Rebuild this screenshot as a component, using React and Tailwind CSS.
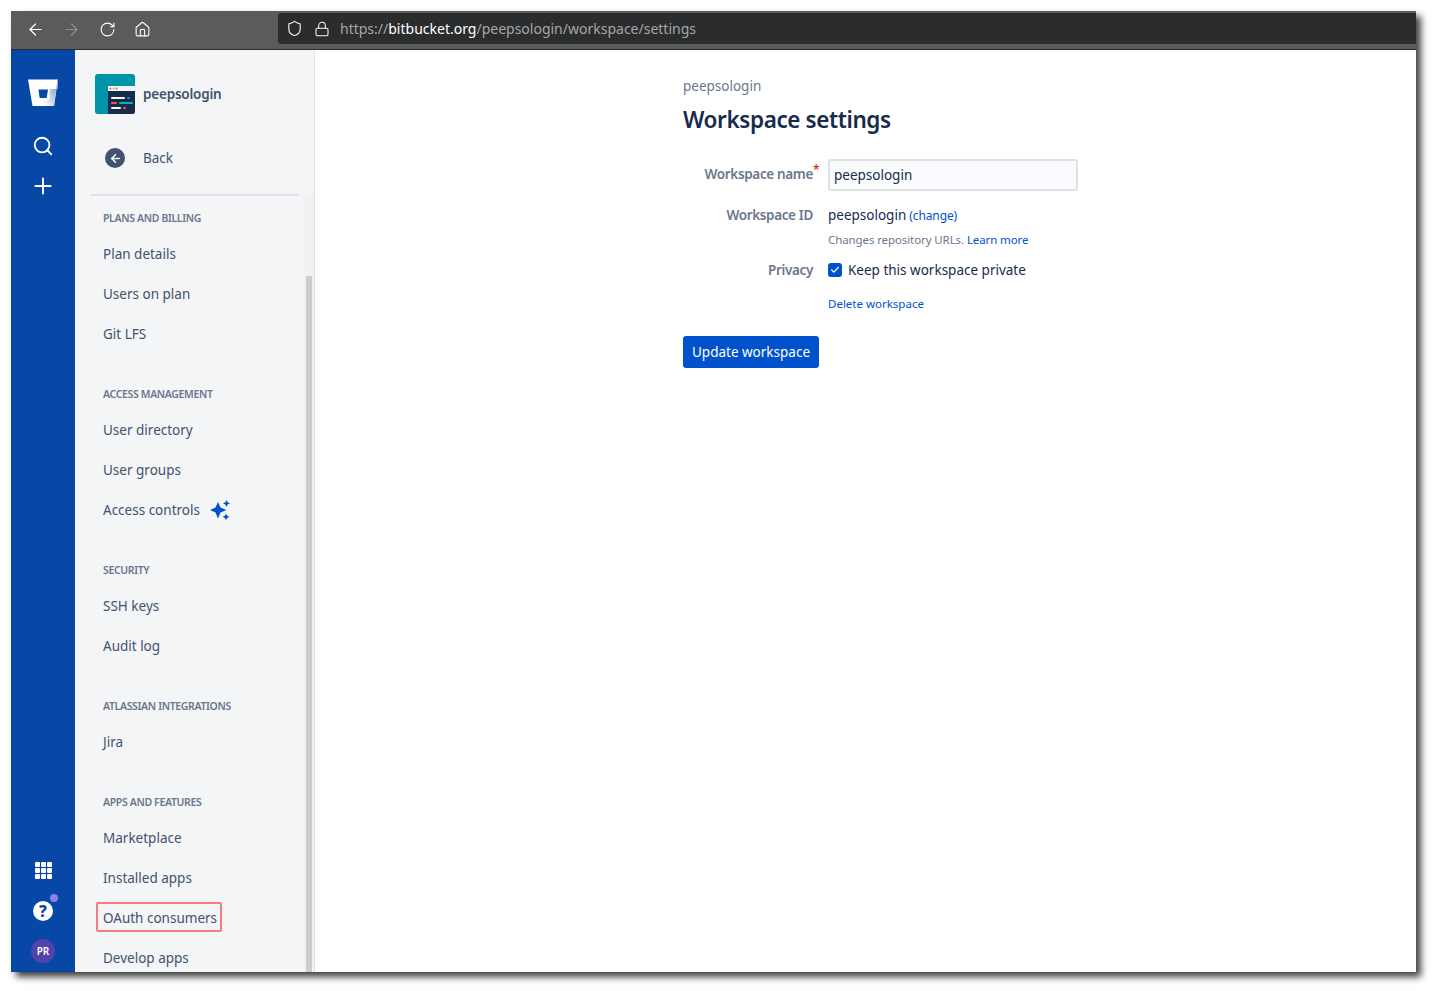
import { ArrowLeft, ArrowRight, RotateCw, Home, Shield, Lock, Search, Plus, Check } from "lucide-react";

const sections = [
  { title: "PLANS AND BILLING", items: ["Plan details", "Users on plan", "Git LFS"] },
  { title: "ACCESS MANAGEMENT", items: ["User directory", "User groups", "Access controls"] },
  { title: "SECURITY", items: ["SSH keys", "Audit log"] },
  { title: "ATLASSIAN INTEGRATIONS", items: ["Jira"] },
  { title: "APPS AND FEATURES", items: ["Marketplace", "Installed apps", "OAuth consumers", "Develop apps"] },
];

const BitbucketLogo = () => (
  <svg width="32" height="30" viewBox="0 0 32 30">
    <defs>
      <linearGradient id="bb" x1="1" y1="0.35" x2="0.3" y2="1">
        <stop offset="0" stopColor="#8aa6d6" />
        <stop offset="1" stopColor="#ffffff" />
      </linearGradient>
    </defs>
    <path d="M1 1.5h30l-4 26.5H5.500z" fill="#fff" />
    <path d="M31 1.500h-0.500l-3.500 26.500H12l2-6h8l1-11h8z" fill="url(#bb)" />
    <path d="M11.500 11.500h9.500l-1.300 8.500h-7z" fill="#0747a6" />
  </svg>
);

const WorkspaceAvatar = () => (
  <svg width="40" height="40" viewBox="0 0 40 40">
    <rect width="40" height="40" rx="3" fill="#0094a8" />
    <path d="M13 12h27v25a3 3 0 0 1-3 3H13z" fill="#172b4d" />
    <rect x="13" y="12" width="27" height="5" fill="#f4f5f7" />
    <circle cx="15.500" cy="14.500" r="1" fill="#ff5630" />
    <circle cx="18.500" cy="14.500" r="1" fill="#ffab00" />
    <circle cx="21.500" cy="14.500" r="1" fill="#36b37e" />
    <rect x="16" y="23" width="14" height="2" rx="1" fill="#f4f5f7" />
    <rect x="32" y="23" width="3" height="2" rx="1" fill="#2684ff" />
    <rect x="16" y="28" width="6" height="2" rx="1" fill="#ff5630" />
    <rect x="24" y="28" width="14" height="2" rx="1" fill="#00b8a9" />
    <rect x="16" y="33" width="10" height="2" rx="1" fill="#f4f5f7" />
    <rect x="28" y="33" width="3" height="2" rx="1" fill="#ff5630" />
  </svg>
);

const Sparkle = () => (
  <svg width="20" height="20" viewBox="0 0 20 20" fill="#0052cc">
    <path d="M8 2 10.500 7.500 16.500 10 10.500 12.500 8 18.500 5.500 12.500 0 10 5.500 7.500z" />
    <path d="M16.500 0l1.100 2.300 2.400 1.100-2.400 1.100-1.100 2.400-1.100-2.400-2.400-1.100 2.400-1.100z" />
    <path d="M16 13.500l1.100 2.200 2.400 1.100-2.400 1.100-1.100 2.300-1.100-2.300-2.400-1.100 2.400-1.100z" />
  </svg>
);

const GridIcon = () => (
  <div className="grid grid-cols-3 gap-[1px] w-[17px]">
    {[...Array(9)].map((_, i) => (
      <span key={i} className="w-[5px] h-[5px] bg-white rounded-[1px]" />
    ))}
  </div>
);

const Sidebar = () => (
  <aside className="relative w-[240px] shrink-0 bg-[#f4f5f7] border-r border-r-[#dfe1e6] overflow-hidden">
    <div className="flex items-center pl-[20px] mt-[24px] h-[40px]">
      <WorkspaceAvatar />
      <span className="ml-[8px] text-[13.500px] font-semibold text-[#42526e] tracking-[-0.2px]">peepsologin</span>
    </div>
    <div className="flex items-center pl-[30px] h-[40px] mt-[24px] mb-[16px]">
      <div className="w-[20px] h-[20px] rounded-full bg-[#42526e] flex items-center justify-center">
        <ArrowLeft size={13} color="#f4f5f7" strokeWidth={3} />
      </div>
      <span className="ml-[18px] text-[13.500px] text-[#42526e]">Back</span>
    </div>
    <div className="mx-[16px] w-[208px] h-[2px] bg-[#dfe1e6]" />
    <nav className="pl-[28px] pt-[14px]">
      {sections.map((s) => (
        <div key={s.title} className="mb-[32px]">
          <div className="h-[16px] mb-[8px] leading-[16px] text-[10.500px] font-semibold text-[#6b778c] tracking-[-0.35px]">{s.title}</div>
          {s.items.map((item) => (
            <div key={item} className="h-[40px] flex items-center text-[13.500px] text-[#42526e] relative">
              {item === "OAuth consumers" ? (
                <span className="absolute left-[-7px] top-[4px] h-[30px] w-[126px] border-2 border-[#f87b80] rounded-[2px]" />
              ) : null}
              <span>{item}</span>
              {item === "Access controls" ? <span className="ml-[10px]"><Sparkle /></span> : null}
            </div>
          ))}
        </div>
      ))}
    </nav>
    <div className="absolute right-0 top-[144px] bottom-0 w-[11px] bg-[#f1f1f1]" />
    <div className="absolute right-[2px] top-[226px] bottom-0 w-[6px] bg-[#cdcdcd]" />
  </aside>
);

export default function App() {
  return (
    <div className="w-[1435px] h-[991px] bg-white overflow-hidden pl-[11px] pt-[11px] font-['Noto_Sans','Open_Sans',sans-serif]">
      <div className="w-[1405px] h-[961px] flex flex-col shadow-[5px_5px_7px_rgba(0,0,0,0.75)]">
        <header className="h-[39px] shrink-0 bg-[#5a5c5c] border-b border-b-[#2b2c2e] flex items-start pt-[2px]">
          <div className="w-[267px] h-[33px] shrink-0 flex items-center pl-[6px]">
            <span className="w-[36px] flex justify-center"><ArrowLeft size={19} color="#fff" strokeWidth={1.5} /></span>
            <span className="w-[36px] flex justify-center"><ArrowRight size={19} color="#8f9191" strokeWidth={1.5} /></span>
            <span className="w-[36px] flex justify-center"><RotateCw size={17} color="#fff" strokeWidth={1.5} /></span>
            <span className="w-[35px] flex justify-center"><Home size={17} color="#fff" strokeWidth={1.5} /></span>
          </div>
          <div className="h-[31px] flex-1 bg-[#2b2c2e] rounded-l-[3px] flex items-center pl-[8px] text-[14px]">
            <Shield size={17} color="#f4f5f7" strokeWidth={1.6} />
            <Lock size={16} color="#f4f5f7" strokeWidth={1.6} className="ml-[11px]" />
            <span className="ml-[10px] text-[#a5a6a7]">
              https://<span className="text-white">bitbucket.org</span>/peepsologin/workspace/settings
            </span>
          </div>
        </header>
        <div className="flex flex-1 min-h-0">
          <div className="w-[64px] shrink-0 bg-[#0747a6] flex flex-col items-center pt-[28px] pb-[9px]">
            <BitbucketLogo />
            <Search size={22} color="#fff" strokeWidth={2} className="mt-[27px]" />
            <Plus size={26} color="#fff" strokeWidth={1.8} className="mt-[16px]" />
            <div className="mt-auto flex flex-col items-center">
              <GridIcon />
              <div className="relative mt-[22px] w-[20px] h-[20px] rounded-full bg-white flex items-center justify-center text-[16px] font-extrabold text-[#0747a6]">
                ?
                <span className="absolute -top-[7px] -right-[5px] w-[8px] h-[8px] rounded-full bg-[#8f7ee7]" />
              </div>
              <div className="mt-[18px] w-[24px] h-[24px] rounded-full bg-[#5243aa] flex items-center justify-center text-[10px] font-semibold text-white">PR</div>
            </div>
          </div>
          <Sidebar />
          <main className="flex-1 bg-white pl-[368px] pt-[26px]">
            <div className="text-[13.500px] leading-[20px] text-[#6b778c]">peepsologin</div>
            <h1 className="mt-[8px] text-[22.500px] leading-[32px] font-semibold text-[#172b4d] tracking-[-0.4px]">Workspace settings</h1>
            <div className="mt-[23px] flex items-center">
              <label className="relative w-[130px] pb-[2px] text-right text-[13.500px] font-semibold text-[#6b778c] tracking-[-0.35px]">
                Workspace name<span className="absolute left-[130px] top-[-3px] text-[#de350b] text-[12px]">*</span>
              </label>
              <input readOnly value="peepsologin" className="ml-[15px] w-[250px] h-[32px] rounded-[3px] border-2 border-[#dfe1e6] bg-[#fafbfc] px-[4px] text-[13.500px] text-[#172b4d]" />
            </div>
            <div className="mt-[14px] flex items-baseline h-[20px]">
              <label className="w-[130px] text-right text-[13.500px] font-semibold text-[#6b778c] tracking-[-0.35px]">Workspace ID</label>
              <span className="ml-[15px] text-[13.500px] text-[#172b4d]">peepsologin</span>
              <a className="ml-[3px] text-[12px] text-[#0052cc] tracking-[-0.1px]">(change)</a>
            </div>
            <div className="mt-[5px] ml-[145px] text-[11.500px] leading-[20px] text-[#6b778c] tracking-[-0.1px]">
              Changes repository URLs. <a className="text-[#0052cc]">Learn more</a>
            </div>
            <div className="mt-[10px] flex items-center h-[20px]">
              <label className="w-[130px] text-right text-[13.500px] font-semibold text-[#6b778c] tracking-[-0.35px]">Privacy</label>
              <span className="ml-[15px] w-[14px] h-[14px] rounded-[3px] bg-[#0052cc] flex items-center justify-center">
                <Check size={10} color="#fff" strokeWidth={3} />
              </span>
              <span className="ml-[6px] text-[13.500px] text-[#172b4d]">Keep this workspace private</span>
            </div>
            <a className="block mt-[14px] ml-[145px] text-[11.500px] leading-[20px] text-[#0052cc]">Delete workspace</a>
            <button className="mt-[22px] h-[32px] w-[136px] rounded-[3px] bg-[#0052cc] text-[13.500px] text-white">Update workspace</button>
          </main>
        </div>
      </div>
    </div>
  );
}
